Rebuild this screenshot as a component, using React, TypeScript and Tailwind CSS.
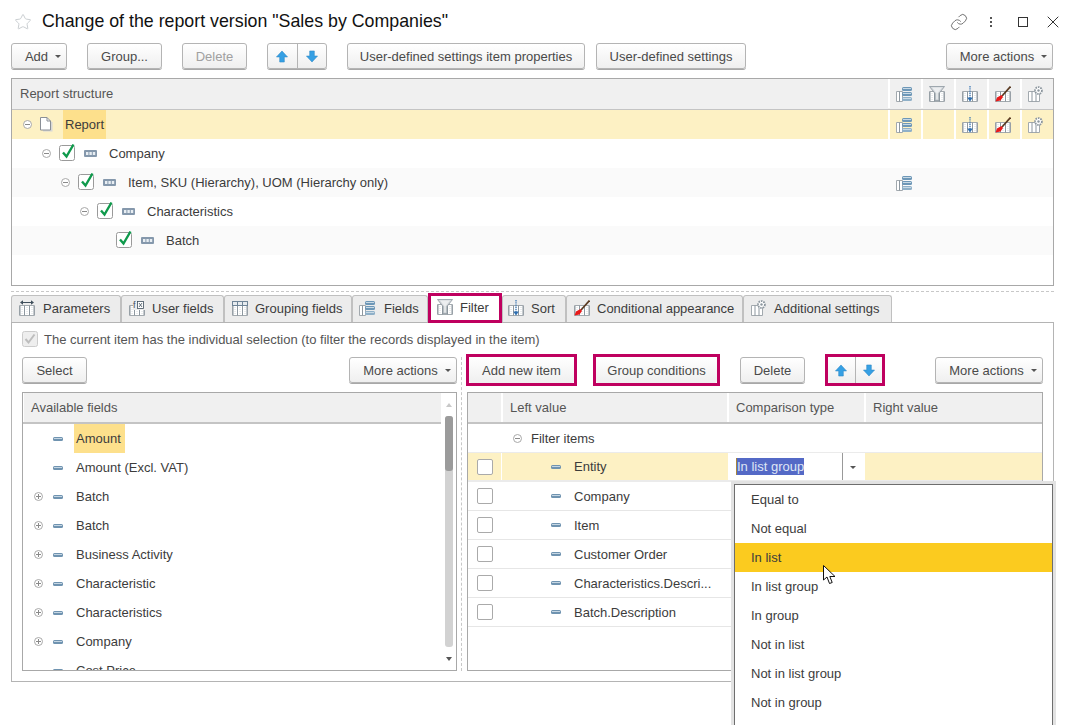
import { Link, Star, X } from 'lucide-react';
import type { ReactNode } from 'react';

const MAGENTA = 'border-[3px] border-[#bf005f]';

function Btn({ children, className = '', disabled = false }: { children: ReactNode; className?: string; disabled?: boolean }) {
  return (
    <div
      className={`flex h-[26px] shrink-0 items-center justify-center rounded-[3px] border border-[#b4b4b4] bg-linear-to-b from-white to-[#efefef] shadow-[0_1px_0_#a8a8a8] ${
        disabled ? 'text-[#a0a0a0]' : 'text-[#4a4a4a]'
      } ${className}`}
    >
      {children}
    </div>
  );
}

function Caret() {
  return <span className="ml-[7px] mt-[1px] h-0 w-0 border-x-[3px] border-t-[3px] border-x-transparent border-t-[#555]" />;
}

function Arrow({ down = false }: { down?: boolean }) {
  return (
    <svg width="12" height="13" viewBox="0 0 13 14" className={down ? 'rotate-180' : ''}>
      <path d="M6.5 1 12.5 7.5H9V13H4V7.5H.5Z" fill="#36a0e4" stroke="#2b86c4" strokeWidth=".6" />
    </svg>
  );
}

function ArrowPair({ className = '' }: { className?: string }) {
  return (
    <Btn className={className}>
      <span className="flex h-full flex-1 items-center justify-center border-r border-[#b4b4b4]">
        <Arrow />
      </span>
      <span className="flex h-full flex-1 items-center justify-center">
        <Arrow down />
      </span>
    </Btn>
  );
}

function Toggle({ plus = false }: { plus?: boolean }) {
  return (
    <svg width="9" height="9" viewBox="0 0 9 9" className="shrink-0">
      <circle cx="4.5" cy="4.5" r="4" fill="#fff" stroke="#a8a8a8" />
      <path d={plus ? 'M2 4.5h5M4.5 2v5' : 'M2 4.5h5'} stroke="#8a8a8a" />
    </svg>
  );
}

function Check() {
  return (
    <svg width="17" height="18" viewBox="0 0 17 18" className="shrink-0 overflow-visible">
      <rect x=".5" y="2.5" width="15" height="15" rx="2" fill="#fff" stroke="#9a9a9a" />
      <path d="M4 9.5 7.5 13.5 14.5 1.5" fill="none" stroke="#0f9a4c" strokeWidth="2.4" />
    </svg>
  );
}

function Box() {
  return <span className="h-[16px] w-[16px] rounded-[2px] border border-[#aaa] bg-white" />;
}

function GroupIcon() {
  return (
    <svg width="13" height="7" viewBox="0 0 13 7" className="shrink-0">
      <rect width="13" height="7" rx="1" fill="#8598ac" />
      <path d="M2 2h2.4v3H2zM5.4 2h2.4v3H5.4zM8.8 2h2.4v3H8.8z" fill="#e8eef3" />
    </svg>
  );
}

function Dash() {
  return (
    <svg width="10" height="4" viewBox="0 0 10 4" className="shrink-0">
      <rect width="10" height="4" rx="1.5" fill="#6f93b0" />
      <rect x="1" y="1" width="8" height="1" fill="#c5d6e3" />
    </svg>
  );
}

function Doc() {
  return (
    <svg width="13" height="15" viewBox="0 0 13 15" className="shrink-0">
      <path d="M3 2v12.5h9.5V5" fill="#d8d8d8" />
      <path d="M.5.5h6.5l3.5 3.5v9H.5Z" fill="#fff" stroke="#8a8f96" />
      <path d="M7 .5V4h3.5" fill="none" stroke="#8a8f96" />
    </svg>
  );
}

// the small table that most of the column icons sit on
function Cols({ children }: { children?: ReactNode }) {
  return (
    <svg width="16" height="16" viewBox="0 0 16 16" className="shrink-0">
      <path d="M.5 5.5h15v10H.5z" fill="#fff" stroke="#a2a9ae" />
      <path d="M1 6v9M5.5 5.5v10M10.5 5.5v10M15 6v9" stroke="#8d979f" />
      <path d="M3 7v8M8 7v8M13 7v8" stroke="#d5dadd" strokeDasharray="1 1" />
      {children}
    </svg>
  );
}

const FieldsIcon = () => (
  <svg width="16" height="16" viewBox="0 0 16 16" className="shrink-0">
    <path d="M.5 5.5h6v10h-6z" fill="#fff" stroke="#a2a9ae" />
    <path d="M3.5 5.5v10" stroke="#8d979f" />
    <rect x="6" y="1" width="10" height="4" rx="1.5" fill="#6d97b7" />
    <rect x="6" y="6" width="10" height="4" rx="1.5" fill="#6d97b7" />
    <rect x="6" y="11" width="10" height="4" rx="1.5" fill="#8fb0c8" />
    <path d="M7 2.5h8M7 7.5h8M7 12.5h8" stroke="#c8d9e5" />
  </svg>
);
const FilterIcon = () => (
  <Cols>
    <path d="M.5.5h15L10 7.5V14.5H6V7.5Z" fill="#d3d7da" stroke="#8d979f" strokeWidth=".8" />
    <path d="M3 1.5h10L8.6 7v6H7.4V7Z" fill="#eceef0" />
  </Cols>
);
const SortIcon = () => (
  <Cols>
    <path d="M8 0v12" stroke="#2f6fb0" strokeWidth="1.2" strokeDasharray="1.4 .8" />
    <path d="M5.2 11.5h5.6L8 15.5Z" fill="#2f6fb0" />
  </Cols>
);
const PaintIcon = () => (
  <Cols>
    <path d="M7 10 15.5.5" stroke="#5a3a22" strokeWidth="1.7" />
    <path d="M.5 15.5 2 11.5 6.5 9l1.5 2-2.5 3.5Z" fill="#e81a1a" />
  </Cols>
);
const GearIcon = () => (
  <svg width="16" height="16" viewBox="0 0 16 16" className="shrink-0">
    <path d="M.5 5.5h11v10H.5z" fill="#fff" stroke="#a2a9ae" />
    <path d="M4 5.5v10M8 5.5v10" stroke="#8d979f" />
    <circle cx="10.5" cy="4.5" r="3.4" fill="#fff" stroke="#8d979f" strokeWidth="1.8" strokeDasharray="1.6 .9" />
    <circle cx="10.5" cy="4.5" r="1.2" fill="#8d979f" />
  </svg>
);
const ParamIcon = () => (
  <Cols>
    <path d="M3 2.5h10" stroke="#3f4f5c" />
    <path d="M1 2.5l3-2.2v4.4zM15 2.5l-3-2.2v4.4z" fill="#3f4f5c" />
  </Cols>
);
const UserIcon = () => (
  <Cols>
    <rect x="4" y="0" width="12" height="10" fill="#ececec" />
    <text x="4" y="8" fontSize="9" fontFamily="Liberation Sans, sans-serif" fill="#3f4f5c">
      f
    </text>
    <rect x="8.5" y="1.5" width="6" height="7" fill="#fff" stroke="#3f4f5c" strokeWidth=".8" />
    <path d="M10 3l3 4M13 3l-3 4" stroke="#3f4f5c" strokeWidth=".8" />
  </Cols>
);
const GroupColsIcon = () => (
  <Cols>
    <rect x=".5" y="1.5" width="15" height="4" fill="#e6ebef" stroke="#6f8497" />
    <path d="M5.5 1.5v4M10.5 1.5v4" stroke="#6f8497" />
  </Cols>
);

const headerIcons = [FieldsIcon, FilterIcon, SortIcon, PaintIcon, GearIcon];

const treeRows = [
  { label: 'Company', pad: 'pl-[30px]', toggle: true, bg: 'bg-white' },
  { label: 'Item, SKU (Hierarchy), UOM (Hierarchy only)', pad: 'pl-[49px]', toggle: true, bg: 'bg-[#fafafa]', fields: true },
  { label: 'Characteristics', pad: 'pl-[68px]', toggle: true, bg: 'bg-white' },
  { label: 'Batch', pad: 'pl-[104px]', toggle: false, bg: 'bg-[#fafafa]' },
];

const tabs = [
  { label: 'Parameters', Icon: ParamIcon, width: 'w-[110px]', pad: 'pl-[7px]', gap: 'ml-[8px]' },
  { label: 'User fields', Icon: UserIcon, width: 'w-[103px]', pad: 'pl-[7px]', gap: 'ml-[7px]' },
  { label: 'Grouping fields', Icon: GroupColsIcon, width: 'w-[128px]', pad: 'pl-[7px]', gap: 'ml-[7px]' },
  { label: 'Fields', Icon: FieldsIcon, width: 'w-[76px]', pad: 'pl-[6px]', gap: 'ml-[9px]' },
  { label: 'Filter', Icon: FilterIcon, width: 'w-[74px]', pad: 'pl-[6px]', gap: 'ml-[7px]', active: true },
  { label: 'Sort', Icon: SortIcon, width: 'w-[64px]', pad: 'pl-[5px]', gap: 'ml-[7px]' },
  { label: 'Conditional appearance', Icon: PaintIcon, width: 'w-[177px]', pad: 'pl-[7px]', gap: 'ml-[7px]' },
  { label: 'Additional settings', Icon: GearIcon, width: 'w-[149px]', pad: 'pl-[7px]', gap: 'ml-[7px]' },
];

const fields = [
  { label: 'Amount', highlight: true },
  { label: 'Amount (Excl. VAT)' },
  { label: 'Batch', plus: true },
  { label: 'Batch', plus: true },
  { label: 'Business Activity', plus: true },
  { label: 'Characteristic', plus: true },
  { label: 'Characteristics', plus: true },
  { label: 'Company', plus: true },
  { label: 'Cost Price' },
];

const filterItems = ['Company', 'Item', 'Customer Order', 'Characteristics.Descri...', 'Batch.Description'];

const comparison = ['Equal to', 'Not equal', 'In list', 'In list group', 'In group', 'Not in list', 'Not in list group', 'Not in group'];

export default function App() {
  return (
    <div className="relative h-[725px] w-[1073px] overflow-hidden bg-white text-[13px] leading-none text-[#3c3c3c] font-['Liberation_Sans',Arial,sans-serif]">
      {/* Title */}
      <div className="flex h-[43px] items-center pl-[14px]">
        <Star size={18} strokeWidth={1.2} className="text-[#c4c8cc]" />
        <h1 className="ml-[10px] text-[17.8px] text-[#111]">Change of the report version "Sales by Companies"</h1>
        <div className="ml-auto flex items-center text-[#555]">
          <Link size={18} strokeWidth={1.3} className="text-[#6e6e6e]" />
          <span className="ml-[22px] flex flex-col gap-[2px]">
            <i className="h-[2px] w-[2px] bg-[#555]" />
            <i className="h-[2px] w-[2px] bg-[#555]" />
            <i className="h-[2px] w-[2px] bg-[#555]" />
          </span>
          <span className="ml-[26px] h-[10px] w-[10px] border-[1.5px] border-[#333]" />
          <X size={20} strokeWidth={1.2} className="ml-[15px] mr-[10px] text-[#333]" />
        </div>
      </div>

      {/* Toolbar */}
      <div className="flex pl-[11px] pr-[20px]">
        <Btn className="w-[56px] pl-[8px]">
          Add
          <Caret />
        </Btn>
        <Btn className="ml-[20px] w-[75px]">Group...</Btn>
        <Btn disabled className="ml-[20px] w-[65px]">
          Delete
        </Btn>
        <ArrowPair className="ml-[20px] w-[60px]" />
        <Btn className="ml-[20px] w-[238px]">User-defined settings item properties</Btn>
        <Btn className="ml-[11px] w-[150px]">User-defined settings</Btn>
        <Btn className="ml-auto w-[107px] pl-[8px]">
          More actions
          <Caret />
        </Btn>
      </div>

      {/* Report structure */}
      <div className="ml-[11px] mt-[9px] h-[208px] w-[1043px] border border-[#a8a8a8]">
        <div className="flex h-[31px] border-b border-[#c4c4c4] bg-[#f0f0f0] pb-[1px]">
          <div className="flex flex-1 items-center pl-[8px] text-[#555]">Report structure</div>
          {headerIcons.map((Icon, i) => (
            <div key={i} className="flex w-[33px] items-center justify-center border-l-2 border-white pr-[3px]">
              <Icon />
            </div>
          ))}
        </div>
        <div className="flex h-[29px] items-center bg-[#fdf1c4]">
          <div className="flex h-full flex-1 items-center pl-[11px]">
            <Toggle />
            <span className="ml-[8px]">
              <Doc />
            </span>
            <span className="ml-[10px] flex h-full items-center bg-[#fde08c] px-[2px]">Report</span>
          </div>
          {[FieldsIcon, null, SortIcon, PaintIcon, GearIcon].map((Icon, i) => (
            <div key={i} className="flex h-full w-[33px] items-center justify-center border-l-2 border-white pr-[3px]">
              {Icon && <Icon />}
            </div>
          ))}
        </div>
        {treeRows.map((row) => (
          <div key={row.label} className={`relative flex h-[29px] items-center ${row.bg} ${row.pad}`}>
            {row.toggle && (
              <span className="mr-[8px]">
                <Toggle />
              </span>
            )}
            <span className="-mt-[3px]">
              <Check />
            </span>
            <span className="ml-[8px]">
              <GroupIcon />
            </span>
            <span className="ml-[12px]">{row.label}</span>
            {row.fields && (
              <span className="absolute left-[884px]">
                <FieldsIcon />
              </span>
            )}
          </div>
        ))}
      </div>

      <div className="ml-[11px] mt-[5px] h-0 w-[1043px] border-t border-dashed border-[#c8c8c8]" />

      {/* Tabs */}
      <div className="ml-[11px] mt-[3px] flex h-[27px] items-end">
        {tabs.map(({ label, Icon, width, pad, gap, active }) => (
          <div
            key={label}
            className={`relative flex items-center whitespace-nowrap pb-[2px] ${width} ${pad} ${
              active
                ? `z-10 -mb-[1px] h-[30px] bg-white ${MAGENTA}`
                : 'h-[27px] rounded-t-[3px] border border-b-0 border-[#c0c0c0] bg-[#ececec]'
            }`}
          >
            <Icon />
            <span className={gap}>{label}</span>
          </div>
        ))}
      </div>

      {/* Panel */}
      <div className="ml-[11px] h-[360px] w-[1043px] border border-[#b4b4b4] px-[10px]">
        <div className="flex h-[34px] items-center pb-[2px]">
          <svg width="16" height="16" viewBox="0 0 16 16" className="shrink-0">
            <rect x=".5" y=".5" width="15" height="15" rx="2" fill="#eee" stroke="#ccc" />
            <path d="M3.5 8 6.5 11.5 12.5 3.5" fill="none" stroke="#bdbdbd" strokeWidth="2" />
          </svg>
          <span className="ml-[6px] text-[#555]">The current item has the individual selection (to filter the records displayed in the item)</span>
        </div>

        <div className="flex h-[314px]">
          {/* Available fields */}
          <div className="w-[435px] shrink-0">
            <div className="flex justify-between">
              <Btn className="w-[65px]">Select</Btn>
              <Btn className="w-[108px] pl-[8px]">
                More actions
                <Caret />
              </Btn>
            </div>
            <div className="relative mt-[9px] h-[279px] overflow-hidden border border-[#a8a8a8]">
              <div className="ml-[1px] mr-[15px] flex h-[29px] items-center bg-[#f0f0f0] pl-[7px] text-[#555]">Available fields</div>
              <div className="mr-[15px] h-[2px] border-b-2 border-[#c4c4c4]" />
              {fields.map((f, i) => (
                <div key={i} className="relative flex h-[29px] items-center">
                  <span className="absolute left-[11px] flex">{f.plus && <Toggle plus />}</span>
                  <span className="ml-[30px]">
                    <Dash />
                  </span>
                  <span className={`ml-[11px] flex h-full items-center pl-[2px] ${f.highlight ? 'bg-[#fde08c] pr-[4px]' : ''}`}>{f.label}</span>
                </div>
              ))}
              {/* scrollbar */}
              <div className="absolute right-[2px] top-0 h-full w-[10px]">
                <span className="absolute left-[2px] top-[10px] h-0 w-0 border-x-[3px] border-b-[4px] border-x-transparent border-b-[#c8c8c8]" />
                <div className="absolute left-[1px] top-[23px] h-[231px] w-[8px] rounded-[3px] bg-[#d2d2d2]">
                  <div className="h-[55px] rounded-[3px] bg-[#9b9b9b]" />
                </div>
                <span className="absolute left-[2px] top-[264px] h-0 w-0 border-x-[3px] border-t-[4px] border-x-transparent border-t-[#555]" />
              </div>
            </div>
          </div>

          {/* Divider */}
          <div className="ml-[4px] mr-[5px] w-0 border-l border-dashed border-[#c8c8c8]" />

          {/* Filter items */}
          <div className="w-[576px] shrink-0">
            <div className="flex h-[26px] items-center">
              <div className={`-ml-[1px] flex ${MAGENTA}`}>
                <Btn className="w-[105px] border-0 shadow-none">Add new item</Btn>
              </div>
              <div className={`ml-[16px] flex ${MAGENTA}`}>
                <Btn className="w-[121px] border-0 shadow-none">Group conditions</Btn>
              </div>
              <Btn className="ml-[20px] w-[65px]">Delete</Btn>
              <div className={`ml-[20px] flex ${MAGENTA}`}>
                <ArrowPair className="w-[54px] border-0 shadow-none" />
              </div>
              <Btn className="ml-auto w-[108px] pl-[8px]">
                More actions
                <Caret />
              </Btn>
            </div>
            <div className="mt-[9px] h-[279px] overflow-hidden border border-[#a8a8a8]">
              <div className="flex h-[31px] border-b-2 border-[#c4c4c4] bg-[#f0f0f0] text-[#555]">
                <div className="w-[33px]" />
                <div className="flex w-[226px] items-center border-l-2 border-white pl-[7px]">Left value</div>
                <div className="flex w-[137px] items-center border-l-2 border-white pl-[7px]">Comparison type</div>
                <div className="flex flex-1 items-center border-l-2 border-white pl-[7px]">Right value</div>
              </div>
              <div className="flex h-[29px] items-center border-b border-[#ebebeb] pl-[45px]">
                <Toggle />
                <span className="ml-[9px]">Filter items</span>
              </div>
              <div className="flex h-[29px] items-center border-b-[2px] border-[#ebebeb]">
                <div className="flex h-full w-[33px] items-center justify-center bg-[#fdf1c4]">
                  <Box />
                </div>
                <div className="ml-[1px] flex h-full w-[226px] items-center bg-[#fdf1c4] pl-[49px]">
                  <Dash />
                  <span className="ml-[13px]">Entity</span>
                </div>
                <div className="flex h-full w-[137px] items-center bg-white pl-[8px]">
                  <span className="flex h-[17px] w-[68px] items-center whitespace-nowrap border-l border-[#a8863c] bg-[#5469c6] text-[#dfe6f5]">In list group</span>
                  <span className="ml-[38px] flex h-full items-center border-l border-[#999]">
                    <Caret />
                  </span>
                </div>
                <div className="h-full flex-1 bg-[#fdf1c4]" />
              </div>
              {filterItems.map((item) => (
                <div key={item} className="flex h-[29px] items-center border-b border-[#e6e6e6]">
                  <div className="flex h-full w-[34px] items-center justify-center">
                    <Box />
                  </div>
                  <div className="flex items-center pl-[49px]">
                    <Dash />
                    <span className="ml-[13px]">{item}</span>
                  </div>
                </div>
              ))}
            </div>
          </div>
        </div>
      </div>

      {/* Dropdown */}
      <div className="absolute left-[734px] top-[484px] h-[260px] w-[319px] border border-[#6e6e6e] bg-white shadow-[0_0_0_3px_#e2e2e2]">
        {comparison.map((c) => (
          <div key={c} className={`flex h-[29px] items-center pl-[16px] ${c === 'In list' ? 'bg-[#fbcb1f]' : ''}`}>
            {c}
          </div>
        ))}
      </div>

      {/* Mouse pointer */}
      <svg width="14" height="20" viewBox="0 0 14 20" className="absolute left-[823px] top-[565px]">
        <path d="M.5.5V15L4 12l2.5 6.5 2.7-1L6.8 11.5h5.2Z" fill="#fff" stroke="#111" />
      </svg>
    </div>
  );
}
